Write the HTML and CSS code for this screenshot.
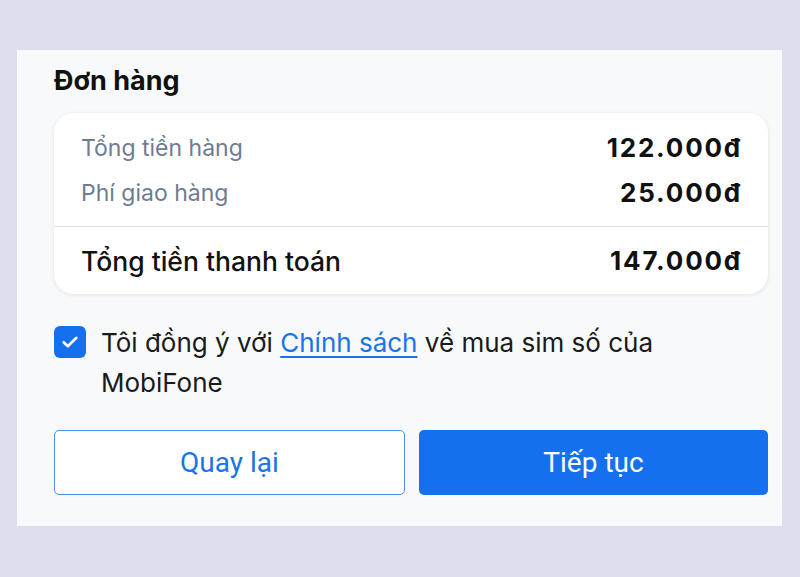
FILE: index.html
```html
<!DOCTYPE html>
<html lang="vi">
<head>
<meta charset="utf-8">
<link rel="stylesheet" href="styles.css">
</head>
<body>
<div class="panel">
  <h2 class="title">Đơn hàng</h2>
  <div class="card">
    <div class="rows">
      <div class="row"><span class="label">Tổng tiền hàng</span><span class="amount">122.000đ</span></div>
      <div class="row"><span class="label">Phí giao hàng</span><span class="amount">25.000đ</span></div>
    </div>
    <div class="total row"><span class="total-label">Tổng tiền thanh toán</span><span class="amount">147.000đ</span></div>
  </div>
  <div class="agree">
    <span class="check"><svg width="20" height="20" viewBox="0 0 20 20"><path d="M3.6 10.2l4.2 4L16.4 5.8" fill="none" stroke="#fff" stroke-width="2.6" stroke-linecap="round" stroke-linejoin="round"/></svg></span>
    <p class="agree-text">Tôi đồng ý với <a class="link" href="#">Chính sách</a> về mua sim số của MobiFone</p>
  </div>
  <div class="actions">
    <button class="btn btn-outline">Quay lại</button>
    <button class="btn btn-primary">Tiếp tục</button>
  </div>
</div>
</body>
</html>
```
FILE: styles.css
```css
* { box-sizing: border-box; }
html, body { margin: 0; padding: 0; }
body {
  background: #dfdeef;
  width: 800px;
  height: 577px;
  font-family: Inter, "Noto Sans", sans-serif;
  padding: 50px 18px 0 17px;
}
.panel {
  background: #f8f9fb;
  height: 476px;
  padding: 13px 14px 0 37px;
}
.title {
  margin: 0;
  font-size: 27px;
  font-weight: 700;
  color: #111;
  line-height: 36px;
}
.card {
  margin-top: 14px;
  background: #fff;
  border-radius: 20px;
  box-shadow: 0 1px 4px rgba(30, 40, 70, 0.10);
  width: 714px;
}
.rows {
  padding: 12px 27px 11px 27px;
  border-bottom: 1px solid #dde2ea;
}
.row {
  display: flex;
  justify-content: space-between;
  align-items: center;
  height: 45px;
}
.total { padding: 0 27px; height: 67px; }
.label { font-size: 23px; color: #6f7b91; }
.total-label { font-size: 26.5px; color: #111; font-weight: 500; }
.amount { font-size: 26px; font-weight: 700; color: #111; letter-spacing: 1.8px; margin-right: -1px; }
.agree {
  display: flex;
  align-items: flex-start;
  gap: 15px;
  margin-top: 32px;
  width: 714px;
}
.check {
  flex: none;
  width: 32px;
  height: 32px;
  border-radius: 6px;
  background: #1570ef;
  display: flex;
  align-items: center;
  justify-content: center;
}
.agree-text {
  margin: 0;
  font-size: 26px;
  line-height: 40px;
  color: #1a1a1a;
  margin-top: -3px;
}
.link { color: #1a73e8; text-decoration: underline; text-underline-offset: 4px; text-decoration-thickness: 1.5px; }
.actions {
  display: flex;
  gap: 14px;
  margin-top: 27px;
  width: 714px;
}
.btn {
  flex: 1;
  height: 65px;
  border-radius: 5px;
  font-family: Roboto, sans-serif;
  font-size: 28px;
  cursor: pointer;
}
.btn-outline {
  background: #fff;
  border: 1.5px solid #4d8ef5;
  color: #1a73e8;
}
.btn-primary {
  background: #1570ef;
  border: none;
  color: #fff;
}
```
